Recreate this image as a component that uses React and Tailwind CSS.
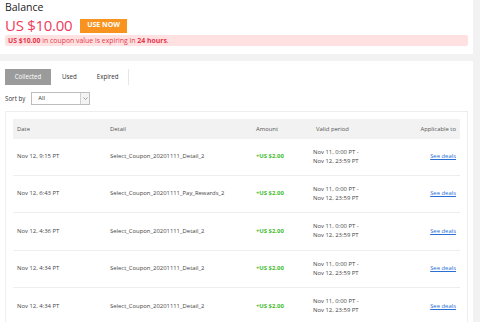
import React from "react";

const rows = [
  ["Nov 12, 9:15 PT", "Select_Coupon_20201111_Detail_2"],
  ["Nov 12, 6:43 PT", "Select_Coupon_20201111_Pay_Rewards_2"],
  ["Nov 12, 4:36 PT", "Select_Coupon_20201111_Detail_2"],
  ["Nov 12, 4:34 PT", "Select_Coupon_20201111_Detail_2"],
  ["Nov 12, 4:34 PT", "Select_Coupon_20201111_Detail_2"],
];

export default function App() {
  return (
    <div
      className="w-[480px] h-[322px] overflow-hidden bg-[#f2f2f2] pr-[7px]"
      style={{ fontFamily: '"Open Sans", "Noto Sans", sans-serif' }}
    >
      <div className="bg-white px-[5px] pt-[1px] pb-[8px]">
        <div className="text-[10.5px] leading-[13px] text-[#222]">Balance</div>
        <div className="flex items-center gap-[8px] mt-[4px] h-[15px]">
          <span className="text-[15px] leading-[15px] text-[#f23a5c] tracking-[-0.3px]">US $10.00</span>
          <span className="bg-[#f7931e] text-white text-[7px] font-bold h-[14px] w-[47px] flex items-center justify-center">
            USE NOW
          </span>
        </div>
        <div className="mt-[2px] bg-[#ffe1e1] rounded-[2px] h-[11px] w-[463px] flex items-center pl-[3px] text-[6.9px] leading-[11px] text-[#e8354b]">
          <span className="font-bold">US $10.00</span>
          <span>&nbsp;in coupon value is expiring in&nbsp;</span>
          <span className="font-bold">24 hours</span>
          <span>.</span>
        </div>
      </div>

      <div className="mt-[7px] bg-white px-[5px] pt-[8px] h-[300px]">
        <div className="flex items-center h-[16px] w-[124px] border-r border-[#e6e6e6] text-[6.2px] text-[#333]">
          <div className="bg-[#9b9b9b] text-white w-[46px] h-[16px] flex items-center justify-center">Collected</div>
          <div className="ml-[11px]">Used</div>
          <div className="ml-[20px]">Expired</div>
        </div>
        <div className="flex items-center mt-[7px] h-[13px] text-[6.2px] text-[#333]">
          <span>Sort by</span>
          <div className="ml-[6px] w-[59px] h-[13px] border border-[#bdbdbd] flex items-center">
            <span className="pl-[6px] flex-1 text-[5.8px]">All</span>
            <div className="w-[9px] h-full border-l border-[#cfcfcf] bg-[#f3f3f3] flex items-center justify-center">
              <svg width="5" height="3" viewBox="0 0 5 3"><path d="M0.5 0.5 L2.5 2.5 L4.5 0.5" stroke="#888" strokeWidth="0.8" fill="none" /></svg>
            </div>
          </div>
        </div>

        <div className="mt-[6px] border border-[#eeeeee] w-[463px] px-[7px] pt-[7px]">
          <div className="grid grid-cols-[97px_146px_57px_1fr] items-center h-[20px] bg-[#f2f2f2] text-[5.9px] text-[#555]">
            <span className="pl-[4px]">Date</span>
            <span>Detail</span>
            <span>Amount</span>
            <span className="flex justify-between pr-[4px]">
              <span className="pl-[3px]">Valid period</span>
              <span>Applicable to</span>
            </span>
          </div>
          {rows.map((r, i) => (
            <div
              key={i}
              className={
                (i === 0 ? "h-[36.5px] " : "h-[37.5px] ") +
                "grid grid-cols-[97px_146px_57px_1fr] items-center border-b border-[#eeeeee] text-[5.9px] text-[#444]"
              }
            >
              <span className="pl-[4px]">{r[0]}</span>
              <span>{r[1]}</span>
              <span className="text-[#3dbb2b] font-bold">+US $2.00</span>
              <span className="flex justify-between items-center pr-[4px]">
                <span className="leading-[9px]">
                  Nov 11, 0:00 PT -<br />Nov 12, 23:59 PT
                </span>
                <span className="text-[#2a6fd6] underline">See deals</span>
              </span>
            </div>
          ))}
        </div>
      </div>
    </div>
  );
}
